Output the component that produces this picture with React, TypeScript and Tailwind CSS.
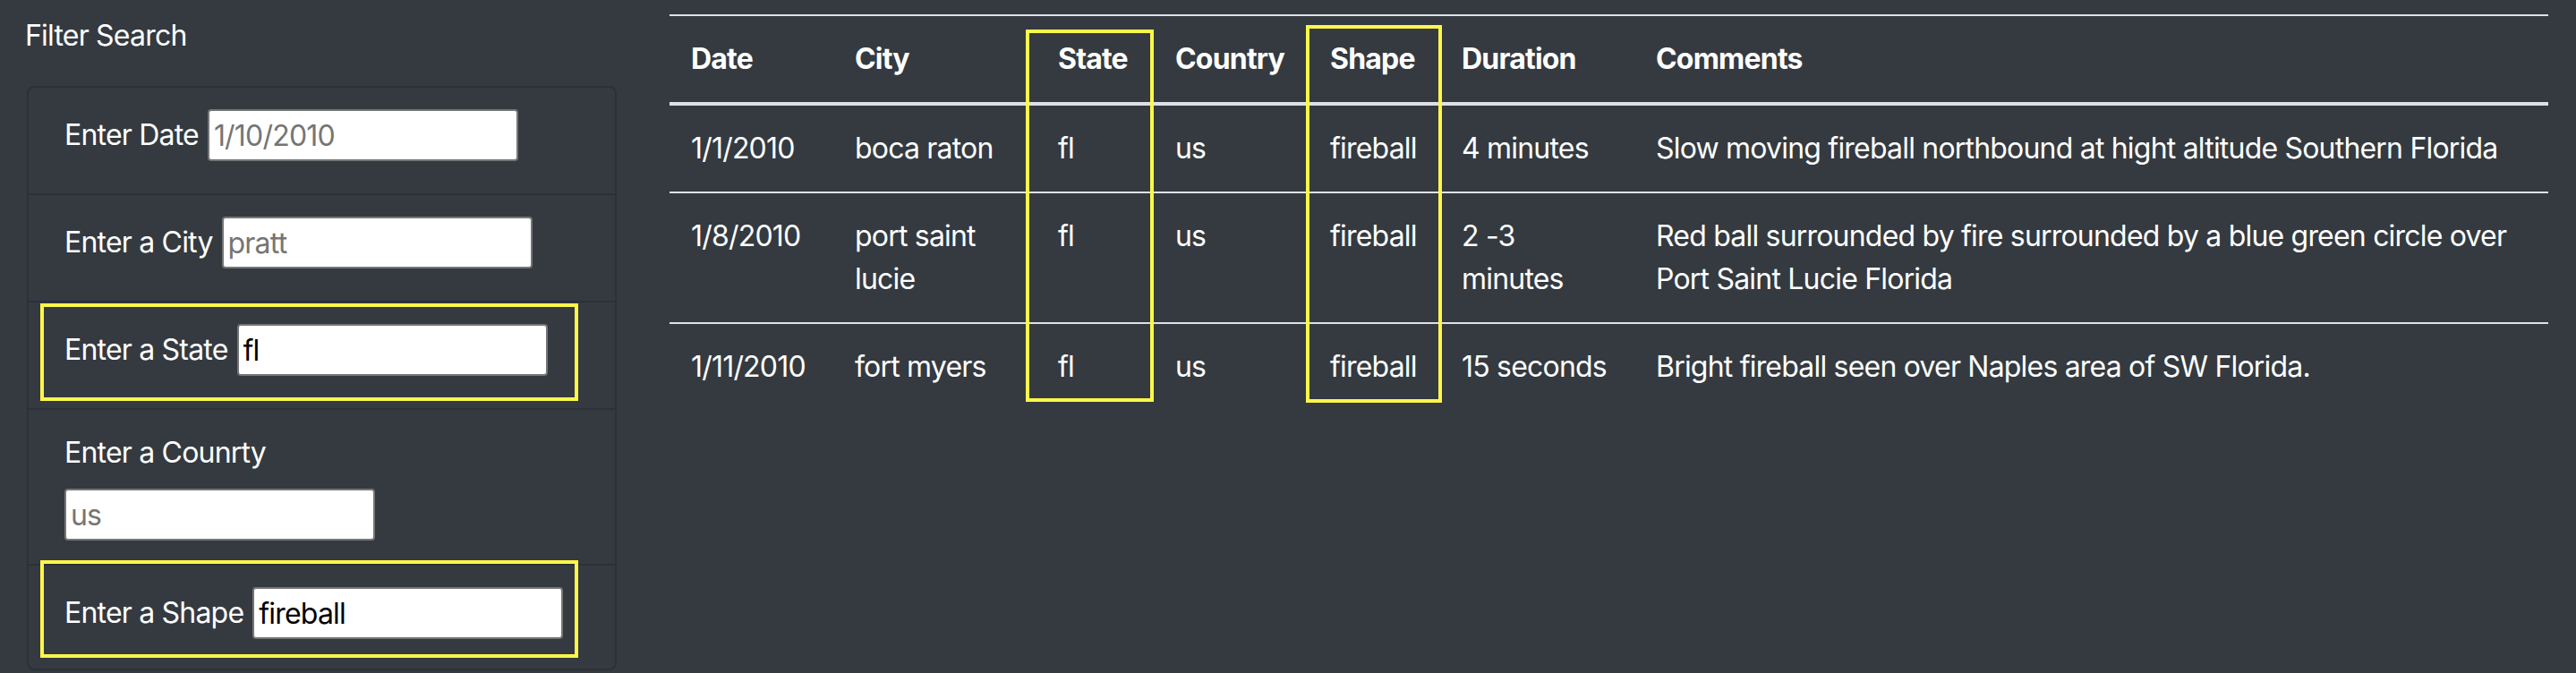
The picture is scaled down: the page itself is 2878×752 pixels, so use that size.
import React from "react";

const rows = [
  {
    date: "1/1/2010",
    city: "boca raton",
    state: "fl",
    country: "us",
    shape: "fireball",
    duration: "4 minutes",
    comments: "Slow moving fireball northbound at hight altitude Southern Florida",
  },
  {
    date: "1/8/2010",
    city: "port saint lucie",
    state: "fl",
    country: "us",
    shape: "fireball",
    duration: "2 -3 minutes",
    comments: "Red ball surrounded by fire surrounded by a blue green circle over Port Saint Lucie Florida",
  },
  {
    date: "1/11/2010",
    city: "fort myers",
    state: "fl",
    country: "us",
    shape: "fireball",
    duration: "15 seconds",
    comments: "Bright fireball seen over Naples area of SW Florida.",
  },
];

const inputCls =
  "w-[347px] h-[58px] bg-white border-2 border-[#767676] rounded-[4px] pl-[5px] text-black text-[32px] leading-[48px] tracking-[-0.8px] placeholder:text-[#757575] outline-none";

export default function App() {
  return (
    <div className="min-h-[752px] w-[2878px] bg-[#343a40] text-white font-['Inter',sans-serif] text-[32px] leading-[48px] tracking-[-0.8px] flex">
      {/* Left column */}
      <div className="w-[719px] shrink-0 px-[30px] pt-[16px]">
        <div className="-ml-[2px]">Filter Search</div>
        <div className="mt-[32px] border-2 border-[#2c3137] rounded-[8px]">
          <div className="relative h-[118px] pt-[24px] pl-[40px] flex items-start">
            <div className="flex items-center gap-[10px]">
              <span>Enter Date</span>
              <input className={inputCls} placeholder="1/10/2010" />
            </div>
          </div>
          <div className="relative h-[120px] border-t-2 border-[#2c3137] pt-[24px] pl-[40px] flex items-start">
            <div className="flex items-center gap-[10px]">
              <span>Enter a City</span>
              <input className={inputCls} placeholder="pratt" />
            </div>
          </div>
          <div className="relative h-[120px] border-t-2 border-[#2c3137] pt-[24px] pl-[40px] flex items-start">
            <div className="flex items-center gap-[10px]">
              <span>Enter a State</span>
              <input className={inputCls} defaultValue="fl" />
            </div>
            <div className="absolute top-[1px] left-[13px] w-[601px] h-[109px] border-[4px] border-[#fff64a] pointer-events-none" />
          </div>
          <div className="relative h-[174px] border-t-2 border-[#2c3137] pt-[24px] pl-[40px]">
            <div className="mb-[16px]">Enter a Counrty</div>
            <input className={inputCls} placeholder="us" />
          </div>
          <div className="relative h-[117px] border-t-2 border-[#2c3137] pt-[24px] pl-[40px] flex items-start">
            <div className="flex items-center gap-[10px]">
              <span>Enter a Shape</span>
              <input className={inputCls} defaultValue="fireball" />
            </div>
            <div className="absolute top-[-6px] left-[13px] w-[601px] h-[109px] border-[4px] border-[#fff64a] pointer-events-none" />
          </div>
        </div>
      </div>

      {/* Right column */}
      <div className="flex-1 pl-[29px] pr-[31px] pt-[16px]">
        <div className="relative">
          <table className="w-full table-fixed border-collapse text-left">
            <colgroup>
              <col className="w-[183px]" />
              <col className="w-[227px]" />
              <col className="w-[131px]" />
              <col className="w-[173px]" />
              <col className="w-[147px]" />
              <col className="w-[217px]" />
              <col />
            </colgroup>
            <thead>
              <tr>
                {["Date", "City", "State", "Country", "Shape", "Duration", "Comments"].map((h) => (
                  <th
                    key={h}
                    className="p-[24px] font-bold align-bottom border-t-2 border-b-4 border-[#dee2e6] whitespace-nowrap"
                  >
                    {h}
                  </th>
                ))}
              </tr>
            </thead>
            <tbody>
              {rows.map((r) => (
                <tr key={r.date}>
                  <td className="p-[24px] align-top border-t-2 border-[#dee2e6]">{r.date}</td>
                  <td className="p-[24px] align-top border-t-2 border-[#dee2e6]">{r.city}</td>
                  <td className="p-[24px] align-top border-t-2 border-[#dee2e6]">{r.state}</td>
                  <td className="p-[24px] align-top border-t-2 border-[#dee2e6]">{r.country}</td>
                  <td className="p-[24px] align-top border-t-2 border-[#dee2e6]">{r.shape}</td>
                  <td className="p-[24px] align-top border-t-2 border-[#dee2e6]">{r.duration}</td>
                  <td className="p-[24px] align-top border-t-2 border-[#dee2e6]">{r.comments}</td>
                </tr>
              ))}
            </tbody>
          </table>
          <div className="absolute top-[17px] left-[398px] w-[143px] h-[416px] border-[4px] border-[#fff64a] pointer-events-none" />
          <div className="absolute top-[12px] left-[711px] w-[152px] h-[422px] border-[4px] border-[#fff64a] pointer-events-none" />
        </div>
      </div>
    </div>
  );
}
